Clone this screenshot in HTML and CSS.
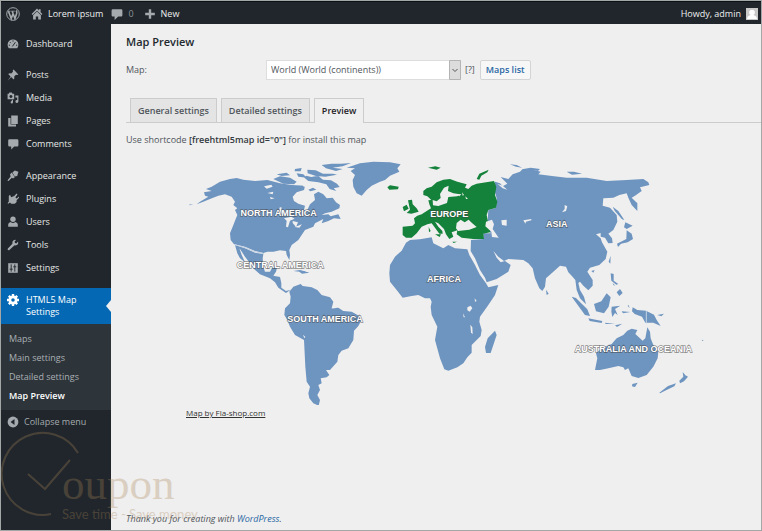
FILE: index.html
```html
<!DOCTYPE html>
<html lang="en">
<head>
<meta charset="utf-8">
<title>Map Preview</title>
<link rel="stylesheet" href="styles.css">
</head>
<body>
<div class="frame">
  <header class="adminbar">
    <a href="#" class="bar-item" aria-label="WordPress">
      <svg class="logo" viewBox="0 0 20 20"><circle cx="10" cy="10" r="9" fill="none" stroke="currentColor" stroke-width="1.4"/><path fill="none" stroke="currentColor" stroke-width="2.3" d="M3.5 6l4 10.5 2.8-8M8.8 6l4 10.5 2.5-7.500q.5-2-.8-4"/><path stroke="currentColor" stroke-width="1.100" d="M2.500 6h4M7.500 6h5"/></svg>
    </a>
    <a href="#" class="bar-item site">
      <svg class="icon" viewBox="0 0 20 20"><path fill="currentColor" d="M10 1l3 3V2h3v5l3 3-1.500 1.500L10 4.500 2.500 11.500 1 10zM10 6l6.500 6v7H12v-5H8v5H3.500v-7z"/></svg>
      <span>Lorem ipsum</span>
    </a>
    <a href="#" class="bar-item muted">
      <svg class="icon" viewBox="0 0 20 20"><path fill="currentColor" d="M3 2h14q2 0 2 2v8q0 2-2 2h-5l-6 6v-6H3q-2 0-2-2V4q0-2 2-2z"/></svg>
      <span>0</span>
    </a>
    <a href="#" class="bar-item new">
      <svg class="icon" viewBox="0 0 20 20"><path fill="currentColor" d="M8 2h4v6h6v4h-6v6H8v-6H2V8h6z"/></svg>
      <span>New</span>
    </a>
    <a href="#" class="bar-item account">
      <span>Howdy, admin</span>
      <svg class="avatar" viewBox="0 0 12 12"><path fill="#c9c9c9" d="M0 0h12v12H0z"/><circle cx="6" cy="4.500" r="2.800" fill="#fff"/><path fill="#fff" d="M1 11q0-3 3.500-4h3Q11 8 11 11z"/></svg>
    </a>
  </header>

  <div class="layout">
    <nav class="sidebar">
      <ul class="menu">
        <li><a href="#"><svg class="icon" viewBox="0 0 20 20"><path fill="currentColor" d="M3 17a9 9 0 1 1 14 0z"/><path stroke="#20262c" stroke-width="1.600" d="M9 14l5-7M3 12h2M5 7l1.500 1.500M10 4v2M15 12h2"/></svg>Dashboard</a></li>
      </ul>
      <ul class="menu">
        <li><a href="#"><svg class="icon" viewBox="0 0 20 20"><path fill="currentColor" d="M11 1l8 8-2 1-2-.500-3 3q1 3-1 5l-4-4-6 6 5-7-4-4q2-2 5-1l3-3-.500-2z"/></svg>Posts</a></li>
        <li><a href="#"><svg class="icon" viewBox="0 0 20 20"><path fill="currentColor" fill-rule="evenodd" d="M1 3h2l1-2h4l1 2h3v9H1zM6.500 5a2.500 2.500 0 1 0 .1 0zM14 6h5v10a2.500 2.500 0 1 1-2-2.500V9h-3zM10 13v4a2 2 0 1 1-2-2v-2z"/></svg>Media</a></li>
        <li><a href="#"><svg class="icon" viewBox="0 0 20 20"><path fill="currentColor" d="M7 1h11v14H7zM2 5h4v11h9v3H2z"/></svg>Pages</a></li>
        <li><a href="#"><svg class="icon" viewBox="0 0 20 20"><path fill="currentColor" d="M4 2h13q2 0 2 2v8q0 2-2 2h-5l-5 5v-5H4q-2 0-2-2V4q0-2 2-2z"/></svg>Comments</a></li>
      </ul>
      <ul class="menu">
        <li><a href="#"><svg class="icon" viewBox="0 0 20 20"><path fill="currentColor" d="M9 4l4-3 6 2-2 7-4 1zM8 4l5 8-3 2-2-1-5 5q-2 1-2-1l5-6-1-4z"/></svg>Appearance</a></li>
        <li><a href="#"><svg class="icon" viewBox="0 0 20 20"><path fill="currentColor" d="M12 5l4-4 1.500 1.500L14 7l2 2 4-3 0 2-4 4 0 3-3 3H7l-2-2-3 2-1-1 2-3V5l2-2 2 4z"/></svg>Plugins</a></li>
        <li><a href="#"><svg class="icon" viewBox="0 0 20 20"><circle cx="10" cy="5.500" r="4.500" fill="currentColor"/><path fill="currentColor" d="M2 18v-4q0-3 4-4 4 3 8 0 4 1 4 4v4z"/></svg>Users</a></li>
        <li><a href="#"><svg class="icon" viewBox="0 0 20 20"><path fill="currentColor" d="M18.500 4q1 4-2 6-2 1-4 .500L4 18.500q-2 1-3-1 0-1 .500-1.500L9 8Q8 4 11 2q2-1 4-.500L12.500 4.500l1 2 2 1z"/></svg>Tools</a></li>
        <li><a href="#"><svg class="icon" viewBox="0 0 20 20"><path fill="currentColor" d="M2 2h16v16H2z"/><path stroke="#20262c" stroke-width="1.500" d="M7 4v12M4.500 12h5M13 4v12M10.500 8h5"/></svg>Settings</a></li>
      </ul>
      <div class="current">
        <a href="#"><svg class="icon" viewBox="0 0 20 20"><circle cx="10" cy="10" r="5.200" fill="none" stroke="currentColor" stroke-width="4.500"/><path stroke="currentColor" stroke-width="4" d="M10 0v4M10 16v4M0 10h4M16 10h4M3 3l3 3M14 14l3 3M3 17l3-3M14 6l3-3"/></svg><span>HTML5 Map Settings</span></a>
      </div>
      <ul class="submenu">
        <li><a href="#">Maps</a></li>
        <li><a href="#">Main settings</a></li>
        <li><a href="#">Detailed settings</a></li>
        <li><a href="#" class="active">Map Preview</a></li>
      </ul>
      <button type="button" class="collapse"><svg class="icon" viewBox="0 0 20 20"><circle cx="10" cy="10" r="9" fill="currentColor"/><path fill="#20262c" d="M12.500 5v10L6 10z"/></svg>Collapse menu</button>
    </nav>

    <main class="content">
      <h1>Map Preview</h1>
      <form class="picker">
        <label for="map">Map:</label>
        <span class="select-wrap">
          <select id="map"><option>World (World (continents))</option></select>
          <svg class="chevron" viewBox="0 0 12 20"><path d="M0 0h12v20H0z" fill="#dcdcdc"/><path d="M.5.5h11v19H.5z" fill="none" stroke="#b4b4b4"/><path d="M3.500 9L6 11.500 8.500 9" fill="none" stroke="#555"/></svg>
        </span>
        <span>[?]</span>
        <button type="button" class="maps-list">Maps list</button>
      </form>
      <nav class="tabs">
        <a href="#">General settings</a>
        <a href="#">Detailed settings</a>
        <a href="#" class="selected">Preview</a>
      </nav>
      <p class="hint">Use shortcode <strong>[freehtml5map id="0"]</strong> for install this map</p>
      <div class="map">
        <svg class="world" viewBox="558 465 1560 750" role="img" aria-label="World map">
          <g class="land">
            <!-- North and Central America, Greenland -->
            <g transform="translate(540 465)">
              <path d="M95 95L120 80 150 72 170 69 190 74 225 78 262 75 300 85 335 90 375 92 372 105 350 112 338 125 342 138 355 146 375 152 372 165 382 165 390 148 405 135 402 118 415 110 430 118 440 130 458 128 468 142 480 150 478 160 455 170 435 175 425 180 445 178 452 184 475 178 482 192 462 190 445 198 425 205 430 192 405 205 400 215 375 225 365 240 355 255 335 270 328 285 330 300 328 315 320 300 318 288 300 286 280 290 262 290 250 294 225 288 195 275 162 268 152 255 150 235 158 215 168 190 172 180 165 165 172 160 160 150 165 140 155 125 135 118 115 122 90 132 70 140 50 148 60 140 85 125 75 122 72 112 95 108 78 102zM26 149l14-2-10 4z"/>
              <path d="M165 270L195 280 225 293 250 297 248 310 250 335 255 350 270 350 278 335 292 335 288 350 280 362 300 366 304 385 304 398 318 408 332 404 318 414 295 398 285 382 270 370 240 358 220 340 210 325 195 305 182 285 178 280 185 300 192 315 195 322 180 310 172 295z"/>
              <path d="M280 72l20-8 30 4 20 12-8 8-32-2zM290 58l30-5 10 8-25 2zM345 42l20-3-3 10-18 0zM350 55l20 3 10 10-25-3zM378 62l16 4 20-4 15 12 24 2 18 10 8 10-18 4 8 8-20-6-10-14-24-6-30-4-12-10zM382 44l25 2 22 10 30 0 12 3-35 6-28-2-25-8zM425 30l30-4 28 0 30-2-25 10-30 4 30 4-20 6-30-8zM385 104l14-6 10 6-18 5zM340 348l20-3 20 5-15 1zM358 350l16-2 14 5-22 3zM458 152l16-1-10 6z"/>
              <path d="M500 38L540 25 580 20 630 22 662 28 652 40 658 50 630 62 615 75 600 80 575 92 560 105 545 122 530 115 520 95 518 75 525 60 512 48 525 40z"/>
            </g>
            <!-- South America -->
            <g transform="translate(690 720)">
              <path d="M190 140L212 132 218 138 245 142 262 150 275 165 300 172 310 185 305 205 325 203 340 213 365 215 388 228 395 240 385 258 372 272 370 300 355 325 335 332 325 345 322 365 300 390 288 390 298 405 290 412 272 415 275 430 265 435 270 450 262 465 270 480 266 497 250 490 238 475 235 460 240 440 230 425 226 380 222 300 195 285 180 260 172 240 163 225 165 205 180 190 182 170 178 155zM272 497l18 6-13 3z"/>
            </g>
            <!-- Africa and Madagascar -->
            <g transform="translate(1140 690)">
              <path d="M78 38L90 30 120 28 155 22 160 40 190 55 205 45 225 55 262 58 268 75 285 105 300 135 318 160 325 172 355 165 345 195 325 225 300 260 298 275 305 300 302 318 290 330 275 345 275 368 262 382 250 400 232 412 205 422 193 418 180 385 165 330 172 290 155 255 152 230 155 215 150 205 135 205 115 195 95 198 68 203 50 180 30 155 28 130 30 105 45 80 65 62zM345 302l5 13-10 30-8 24-14 0-3-18 8-26z"/>
            </g>
            <!-- Asia -->
            <g transform="translate(1440 465)">
              <path d="M45 80L60 85 68 94 82 86 62 66 85 72 98 58 120 50 128 42 150 42 182 50 175 58 210 62 260 68 320 68 380 78 440 75 490 72 505 82 508 90 480 97 485 108 465 122 455 128 472 145 472 168 455 150 445 128 440 115 418 120 400 128 370 130 368 152 390 158 410 180 412 200 400 225 385 236 396 250 398 264 385 265 375 248 362 245 362 234 348 238 362 250 366 262 382 290 377 312 358 330 330 338 322 350 338 375 338 392 325 406 310 392 300 380 295 384 300 405 312 425 318 448 300 430 290 405 286 375 275 362 265 352 258 335 240 332 220 350 198 370 195 395 187 408 178 400 165 370 158 340 145 325 130 315 85 312 72 318 55 305 40 288 50 308 62 322 75 318 92 330 85 350 50 372 20 382 15 368 0 345-15 310-28 288-27 255 10 252 10 235 32 235 22 215 25 165 48 158 50 130 42 100z"/>
              <path d="M398 155l17 13 18 27-7-2-22-26zM436 202l22 10-18 10-8-5zM440 226l15 10 4 16-16 10-20 4-9 10-3-10 28-14zM386 320l6-18-1 24zM392 355l9 2 0 20 14 10-6 2-15-12zM410 412l10-10 8 12-10 9zM398 384l8 8-6-2zM198 404l8 12-6 4zM334 348l10-3-4 8zM90 28l20 2 16 8-18-3zM130 42l22-4 28 4-6 6zM260 50l22 0 24 6-30 3z"/>
            </g>
            <!-- Australia and Oceania -->
            <g transform="translate(1560 810)">
              <path d="M225 300L232 265 228 250 245 235 275 222 290 205 310 195 322 182 335 176 352 180 346 192 368 212 376 205 382 172 390 185 392 205 400 225 415 245 413 265 400 290 380 315 355 324 335 318 325 295 315 300 310 292 295 288 265 295 240 300zM337 342l16-4-8 13-9-2zM418 368l26-20 24-8-5 9-28 13-15 8zM478 332l12-12-2-14 8 10 8 4-12 14-12 6z"/>
              <path d="M155 80L168 84 186 102 202 118 210 138 195 135 178 112zM205 145l22 4 20 4-2 6-36-6zM222 102l22-8 16-24 12 12-6 28-14 20-24-6zM275 110l26-3-16 10 8 18-8-6-8 12-3-16zM338 112l14 8 26 2 24 12 8 16 12 18-22-10-24 0-10-18-22-8-8-8zM255 158l30 4-28 0zM285 166l22-5-16 10zM305 124l26 2-22 4zM412 135l20-4-8 8zM325 104l4 10-6-6zM545 209l6 2-4 2zM448 142l10 6zM464 156l8 6z"/>
            </g>
          </g>
          <g class="land europe" transform="translate(1110 465)">
            <path d="M98 215L128 212 135 205 132 190 142 182 155 178 170 168 183 160 178 148 175 136 184 135 172 124 160 120 160 108 170 100 185 95 200 82 220 74 240 72 262 80 290 88 285 98 295 102 305 92 320 86 372 78 379 95 375 120 382 140 378 158 355 165 350 180 355 205 362 215 360 232 340 236 342 252 310 252 275 248 260 238 262 226 245 232 250 245 238 252 228 238 222 222 205 205 195 200 205 215 217 228 218 236 208 236 195 218 185 205 172 208 155 215 140 235 125 248 108 248 98 240z"/>
            <path d="M114 136l12-2 2 14 12 12 6 10-22 6-14-2 10-10zM98 156l12-7 6 12-14 8zM52 97l8-6 26 4-2 8-26 1zM174 38l22-4 16 4-12 6zM320 72l8-16 28-12-4 8-18 10-6 12zM176 216l6 12-5 4zM195 238l18 0-4 8zM247 260l14 0-10 4z"/>
          </g>
          <!-- lakes, seas and borders -->
          <g class="water">
            <g transform="translate(540 465)"><path d="M252 94l22-5 4 6-18 6zM262 114l18-4-2 8zM270 126l14 4-12 3zM312 190l22-5 10 6-14 6-6 20-6-2 2-18zM338 198l16 4-6 14-10-12zM344 216l22-8-8 10zM298 158l6-2 2 20-6 0zM362 82l22 8-12 6zM430 100l12 4 6 14-16-6z"/><path class="border" d="M162 268L195 278 225 290 252 296"/></g>
            <g transform="translate(690 720)"><path d="M218 284l8 6-2 5zM304 205l20-14-8 14z"/></g>
            <g transform="translate(1140 690)"><path d="M262 232l10-5 5 8-8 10-7-4zM284 205l6 8-5 2zM249 250l6 12-4 0zM271 284l6 8 1 20-5-4z"/></g>
            <g transform="translate(1440 465)"><path d="M18 200l18-6 6 14-4 14 18 26-20-2-2-16-18-16zM64 196l16-2 0 18-14-2zM130 196l24-4 0 4-16 4-2 6zM254 150l8 4-4 14-12 4 8-10zM52 86l16 6 14 12-14-4z"/></g>
            <g transform="translate(1560 810)"><path class="border" d="M379 122v38"/></g>
            <g transform="translate(1110 465)"><path d="M222 98l14-6-2 16 16 7 20 3-8 6-27 2-4 18-26 9-16-2-1-16 12 4 12-10-2-12zM260 204l12-10 12 8 12-8 10 10 14 12-22 8-34 4-6-8zM256 116l18 2-6 6zM276 112l6 8-4 2zM286 124l8 8-6 0z"/></g>
          </g>
          <g class="names">
            <text x="836" y="648">NORTH AMERICA</text>
            <text x="841" y="805">CENTRAL AMERICA</text>
            <text x="975" y="967">SOUTH AMERICA</text>
            <text x="1348" y="651">EUROPE</text>
            <text x="1332" y="847">AFRICA</text>
            <text x="1670" y="681">ASIA</text>
            <text x="1900" y="1055">AUSTRALIA AND OCEANIA</text>
          </g>
        </svg>
        <a href="#" class="credit">Map by Fla-shop.com</a>
      </div>
      <footer>Thank you for creating with <a href="#">WordPress</a>.</footer>
    </main>
  </div>

  <div class="watermark">
    <svg class="mark" viewBox="0 0 84 88"><path fill="none" stroke="currentColor" stroke-width="2" d="M77 22A41 41 0 1 0 50 83M27 43l17 15 25-29"/></svg>
    <div class="words"><div class="brand">oupon</div><div class="tagline">Save time - Save money</div></div>
  </div>
</div>
</body>
</html>
```
FILE: styles.css
```css
* { box-sizing: border-box; }
body {
  margin: 0;
  background: #efefef;
  color: #50565c;
  font: 9px/12px "Open Sans", "Noto Sans", sans-serif;
}
a { color: inherit; text-decoration: none; }
ul { list-style: none; margin: 0; padding: 0; }
button, select { font: inherit; color: inherit; }
.frame {
  position: relative;
  display: flex;
  flex-direction: column;
  min-height: 100vh;
  border: 1px solid #a3a8a6;
}
.icon { width: 12px; height: 12px; flex: none; }

.adminbar {
  display: flex;
  align-items: center;
  height: 23px;
  padding: 2px 3px 0 5px;
  background: #20262c;
  border-top: 1px solid #0b1116;
  color: #eee;
}
.bar-item { display: flex; align-items: center; gap: 5px; }
.bar-item svg { color: #a5aaae; }
.logo { width: 14px; height: 14px; }
.site { margin-left: 11px; }
.muted { margin-left: 8px; color: #8d9296; }
.new { margin-left: 10px; }
.account { margin-left: auto; }
.avatar { width: 12px; height: 12px; }

.layout { display: flex; flex: 1; }
.sidebar {
  width: 110px;
  flex: none;
  background: #20262c;
  color: #e6e6e6;
  padding-top: 8px;
}
.menu { margin-bottom: 9px; }
.menu:first-child { margin-bottom: 8px; }
.menu a { display: flex; align-items: center; gap: 7px; height: 23px; padding-left: 6px; }
.sidebar .icon { color: #a5aaae; }
.current { position: relative; background: #0468b4; color: #fff; }
.current::after {
  content: "";
  position: absolute;
  right: 0;
  top: 12px;
  border: 6px solid transparent;
  border-left: 0;
  border-right: 5px solid #efefef;
}
.current a { display: flex; gap: 7px; padding: 6px 24px 6px 6px; }
.sidebar .current .icon { color: #fff; }
.submenu { padding: 5px 0; background: #2d343a; color: #abb0b4; }
.submenu a { display: block; padding-left: 8px; line-height: 19px; }
.submenu .active { color: #fff; font-weight: 600; }
.collapse {
  display: flex;
  align-items: center;
  gap: 5px;
  height: 24px;
  padding: 0 0 0 6px;
  border: 0;
  background: none;
  color: #a5aaae;
}

.content { flex: 1; display: flex; flex-direction: column; padding: 10px 0 5px 15px; }
h1 { margin: 0; font-size: 11px; line-height: 16px; font-weight: 600; color: #22282e; }
.picker { display: flex; align-items: center; gap: 4px; margin-top: 10px; }
.picker label { width: 136px; }
.select-wrap { position: relative; width: 195px; }
select {
  display: block;
  width: 100%;
  height: 20px;
  padding: 0 16px 0 4px;
  appearance: none;
  border: 1px solid #ddd;
  border-radius: 0;
  background: #fff;
}
.chevron { position: absolute; right: 0; top: 0; width: 12px; height: 20px; pointer-events: none; }
.maps-list {
  height: 20px;
  margin-left: 1px;
  padding: 0 5px;
  border: 1px solid #d2d4d6;
  border-radius: 2px;
  background: #f7f7f7;
  color: #2a68a5;
  font-weight: 600;
}
.tabs { display: flex; gap: 4px; margin-top: 18px; padding-left: 4px; border-bottom: 1px solid #ccc; }
.tabs a {
  height: 24px;
  padding: 0 7px;
  border: 1px solid #ccc;
  border-bottom: 0;
  background: #e4e4e4;
  font-weight: 600;
  line-height: 24px;
}
.tabs .selected { height: 25px; margin-bottom: -1px; background: #efefef; color: #1d2227; }
.hint { margin: 11px 0 9px; }
.hint strong { color: #333a40; font-weight: 600; }
.map { padding-left: 60px; }
.world { display: block; width: 100%; max-width: 520px; }
.land { fill: #6e94c0; }
.europe { fill: #14823a; }
.water { fill: #efefef; }
.border { fill: none; stroke: #c3d3e5; stroke-width: 3; }
.names text {
  fill: #fff;
  stroke: #444;
  stroke-opacity: .6;
  stroke-width: 4px;
  paint-order: stroke;
  font: 700 27px "Liberation Sans", sans-serif;
  text-anchor: middle;
}
.credit { display: inline-block; margin-top: 2px; font-size: 8px; color: #333; text-decoration: underline; }
footer { margin-top: auto; font-style: italic; }
footer a { color: #2a68a5; }

.watermark {
  position: absolute;
  left: 0;
  bottom: 7px;
  display: flex;
  align-items: flex-end;
  color: #a98456;
  opacity: .3;
  pointer-events: none;
}
.mark { width: 84px; height: 88px; margin-bottom: 4px; }
.words { margin-left: -23px; }
.brand { font: 45px/42px "Liberation Serif", serif; }
.tagline { font: 13px/18px Lato, sans-serif; }
```
